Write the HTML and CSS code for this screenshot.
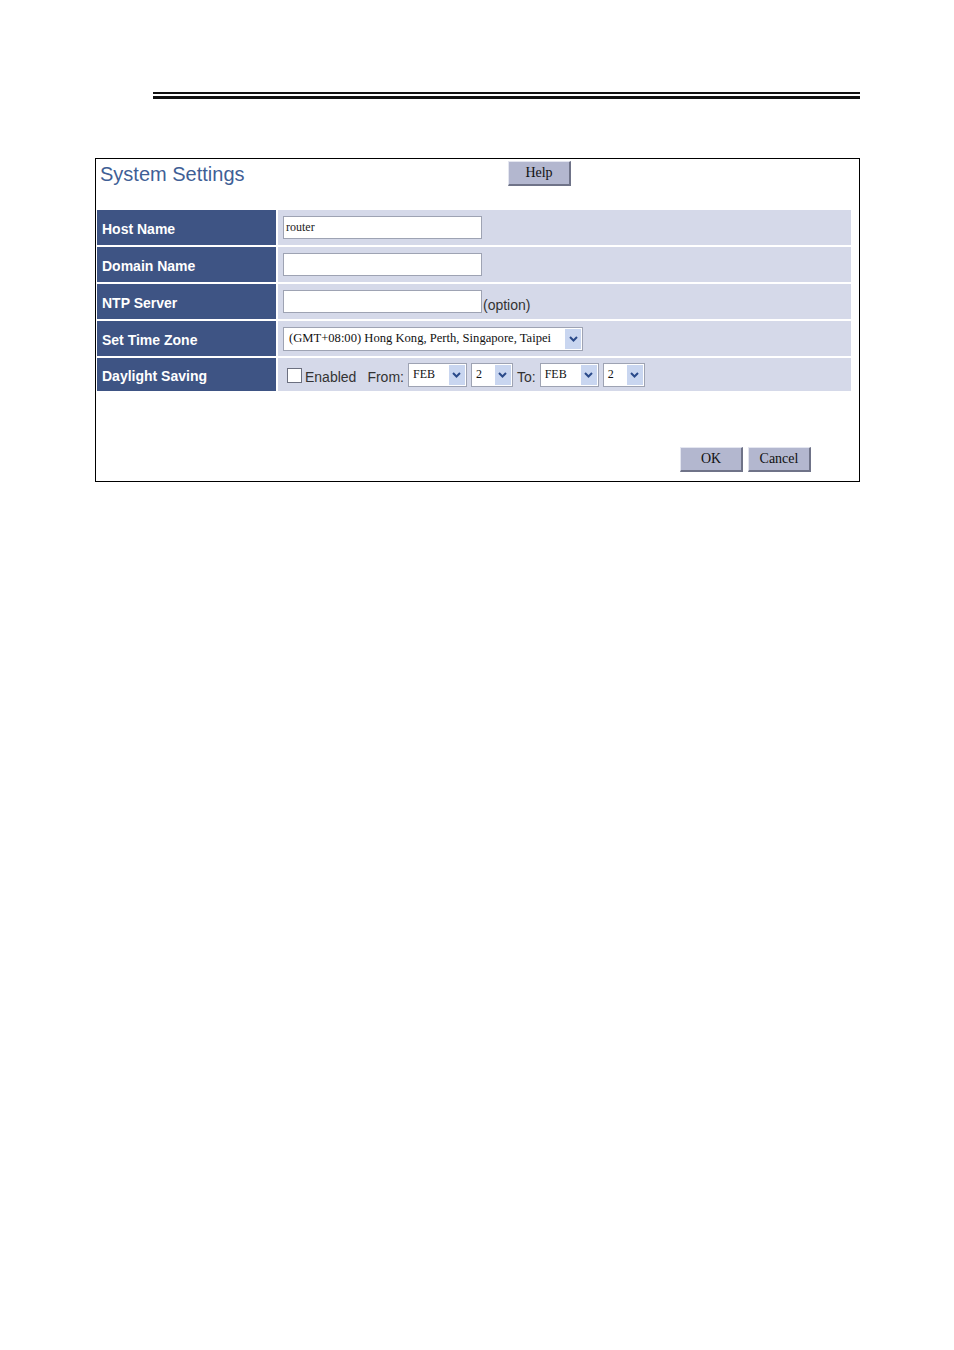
FILE: index.html
```html
<!DOCTYPE html>
<html>
<head>
<meta charset="utf-8">
<title>System Settings</title>
<link rel="stylesheet" href="styles.css">
</head>
<body>
<div class="page">
  <div class="rule"></div>
  <div class="panel">
    <div class="head">
      <div class="title">System Settings</div>
      <button class="btn btn-help">Help</button>
    </div>
    <div class="grid">
      <div class="label">Host Name</div>
      <div class="value"><div class="input">router</div></div>

      <div class="label">Domain Name</div>
      <div class="value"><div class="input"></div></div>

      <div class="label">NTP Server</div>
      <div class="value"><div class="input"></div><span class="note">(option)</span></div>

      <div class="label">Set Time Zone</div>
      <div class="value">
        <div class="select sel-tz"><span class="sel-text">(GMT+08:00) Hong Kong, Perth, Singapore, Taipei</span><span class="arrow"><svg width="9" height="6" viewBox="0 0 9 6"><path d="M1 1 L4.5 4.5 L8 1" fill="none" stroke="#2a4a8a" stroke-width="2"/></svg></span></div>
      </div>

      <div class="label last">Daylight Saving</div>
      <div class="value dst last">
        <span class="check"></span><span class="txt">Enabled</span>
        <span class="txt from">From:</span>
        <div class="select sel-mon"><span class="sel-text">FEB</span><span class="arrow"><svg width="9" height="6" viewBox="0 0 9 6"><path d="M1 1 L4.5 4.5 L8 1" fill="none" stroke="#2a4a8a" stroke-width="2"/></svg></span></div>
        <div class="select sel-num"><span class="sel-text">2</span><span class="arrow"><svg width="9" height="6" viewBox="0 0 9 6"><path d="M1 1 L4.5 4.5 L8 1" fill="none" stroke="#2a4a8a" stroke-width="2"/></svg></span></div>
        <span class="txt to">To:</span>
        <div class="select sel-mon"><span class="sel-text">FEB</span><span class="arrow"><svg width="9" height="6" viewBox="0 0 9 6"><path d="M1 1 L4.5 4.5 L8 1" fill="none" stroke="#2a4a8a" stroke-width="2"/></svg></span></div>
        <div class="select sel-num"><span class="sel-text">2</span><span class="arrow"><svg width="9" height="6" viewBox="0 0 9 6"><path d="M1 1 L4.5 4.5 L8 1" fill="none" stroke="#2a4a8a" stroke-width="2"/></svg></span></div>
      </div>
    </div>
    <div class="foot">
      <button class="btn">OK</button>
      <button class="btn">Cancel</button>
    </div>
  </div>
</div>
</body>
</html>
```
FILE: styles.css
```css
html, body {
  margin: 0;
  padding: 0;
  background: #ffffff;
}
.page {
  width: 954px;
  height: 1350px;
  padding-top: 92px;
  box-sizing: border-box;
}
.rule {
  margin-left: 153px;
  width: 707px;
  height: 2px;
  border-top: 2px solid #111;
  border-bottom: 3px solid #111;
}
.panel {
  margin-top: 59px;
  margin-left: 95px;
  width: 765px;
  height: 324px;
  box-sizing: border-box;
  border: 1px solid #000;
  padding: 0 8px 0 1px;
  display: flex;
  flex-direction: column;
}
.head {
  height: 51px;
  display: flex;
  align-items: flex-start;
}
.title {
  flex: 0 0 411px;
  padding-left: 3px;
  padding-top: 3px;
  box-sizing: border-box;
  font-family: "Liberation Sans", Arial, sans-serif;
  font-size: 20px;
  color: #3f5f96;
  line-height: 24px;
}
.btn {
  width: 63px;
  height: 25px;
  padding: 0;
  background: #b3b7cf;
  border-style: solid;
  border-width: 1px 2px 2px 1px;
  border-color: #e4e6f0 #6f7388 #6f7388 #e4e6f0;
  font-family: "Liberation Serif", "Times New Roman", serif;
  font-size: 14px;
  color: #111;
  line-height: 20px;
}
.btn-help {
  margin-top: 2px;
}
.grid {
  display: grid;
  grid-template-columns: 179px 573px;
  grid-template-rows: 35px 35px 35px 35px 33px;
  gap: 2px;
  width: 754px;
}
.label {
  background: #3e5484;
  color: #ffffff;
  font-family: "Liberation Sans", Arial, sans-serif;
  font-weight: bold;
  font-size: 14px;
  display: flex;
  align-items: center;
  padding-left: 5px;
  padding-top: 2px;
  box-sizing: border-box;
}
.value {
  background: #d5d9e9;
  display: flex;
  align-items: center;
  padding-left: 5px;
  font-family: "Liberation Sans", Arial, sans-serif;
  font-size: 14px;
  color: #333;
}
.input {
  width: 199px;
  height: 23px;
  box-sizing: border-box;
  background: #fff;
  border: 1px solid #9ea3b3;
  font-family: "Liberation Serif", "Times New Roman", serif;
  font-size: 12px;
  line-height: 20px;
  padding-left: 2px;
  color: #222;
}
.note {
  margin-top: 6px;
  margin-left: 1px;
}
.select {
  height: 24px;
  box-sizing: border-box;
  background: #fff;
  border: 1px solid #9ea3b3;
  display: flex;
  align-items: stretch;
  padding: 1px;
}
.sel-text {
  flex: 1;
  font-family: "Liberation Serif", "Times New Roman", serif;
  font-size: 12.6px;
  line-height: 18px;
  padding-left: 4px;
  color: #111;
  white-space: nowrap;
}
.arrow {
  width: 16px;
  background: #c9d6f0;
  display: flex;
  align-items: center;
  justify-content: center;
}
.sel-tz {
  width: 300px;
}
.dst {
  padding-left: 9px;
}
.check {
  width: 13px;
  height: 13px;
  border: 1px solid #6c7080;
  background: #fff;
  margin-top: 2px;
  margin-right: 3px;
}
.txt {
  margin-top: 4px;
}
.from {
  margin-left: 11px;
  margin-right: 4px;
}
.to {
  margin-left: 4px;
  margin-right: 4px;
}
.sel-mon {
  width: 59px;
}
.sel-mon .sel-text { font-size: 12px; padding-left: 3px; }
.sel-num {
  width: 42px;
  margin-left: 4px;
}
.sel-num .sel-text { font-size: 12px; padding-left: 3px; }
.foot {
  flex: 1;
  display: flex;
  justify-content: flex-end;
  align-items: flex-start;
  padding-top: 56px;
  padding-right: 40px;
  gap: 5px;
}
```
